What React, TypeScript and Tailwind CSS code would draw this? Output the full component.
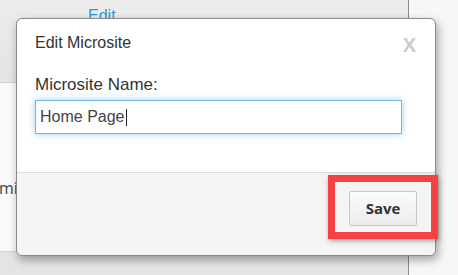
export default function App() {
  return (
    <div className="relative w-[458px] h-[275px] overflow-hidden bg-[#f6f6f6] font-['Liberation_Sans',Arial,sans-serif]">
      {/* ── BACKGROUND PAGE ───────────────────────────── */}
      <div className="flex h-full">
        <div className="flex w-[409px] flex-col border-r border-[#8c8c8c]">
          <div className="h-[83px] border-b border-[#cfcfcf] bg-gradient-to-b from-[#ececec] to-[#e4e4e4] pl-[88px] pt-[4px]">
            <span className="text-[16px] leading-4 text-[#1f9ad6]">Edit</span>
          </div>
          <div className="h-[169px] border-b border-[#d6d6d6] bg-[#fafafa] pt-[94px]">
            <span className="font-['Open_Sans',sans-serif] text-[16px] leading-4 text-[#444] -ml-[1px]">mi</span>
          </div>
          <div className="flex-1 bg-[#e4e4e4]" />
        </div>
        <div className="flex-1 bg-[#f7f7f7]" />
      </div>

      {/* ── DIALOG ─────────────────────────────────────── */}
      <div className="absolute left-[16px] top-[18px] flex h-[238px] w-[420px] flex-col rounded-[6px] border border-[#8a8a8a] bg-white shadow-[2px_4px_10px_rgba(0,0,0,0.35)]">
        <div className="flex-1 px-[18px]">
          <div className="flex items-start justify-between pt-[16px] pr-[1px]">
            <span className="text-[16px] leading-4 text-[#333]">Edit Microsite</span>
            <span className="text-[20px] font-bold leading-5 text-[#cbcbcb]">X</span>
          </div>
          <div className="mt-[21px] text-[17px] leading-[17px] text-[#333]">
            Microsite Name:
          </div>
          <div className="mt-[7px] flex h-[34px] w-[367px] items-center border border-[#72b6ee] pl-[4px] shadow-[0_0_7px_rgba(102,175,233,0.6)]">
            <span className="text-[16px] text-[#444]">Home Page</span>
            <span className="ml-[1px] h-[17px] w-[1px] bg-[#222]" />
          </div>
        </div>
        <div className="flex h-[83px] justify-end rounded-b-[6px] border-t border-[#dadada] bg-[#f4f4f4] pr-[18px] pt-[18px]">
          <button className="h-[35px] w-[68px] rounded-[2px] border border-[#c8c8c8] bg-gradient-to-b from-[#fcfcfc] to-[#ebebeb] font-['Open_Sans',sans-serif] text-[15px] font-bold text-[#333]">
            Save
          </button>
        </div>
      </div>

      {/* ── ANNOTATION ─────────────────────────────────── */}
      <div className="absolute left-[328px] top-[175px] h-[64px] w-[110px] border-[7px] border-[#f24242] shadow-[1px_2px_5px_rgba(0,0,0,0.35)]" />
    </div>
  );
}
